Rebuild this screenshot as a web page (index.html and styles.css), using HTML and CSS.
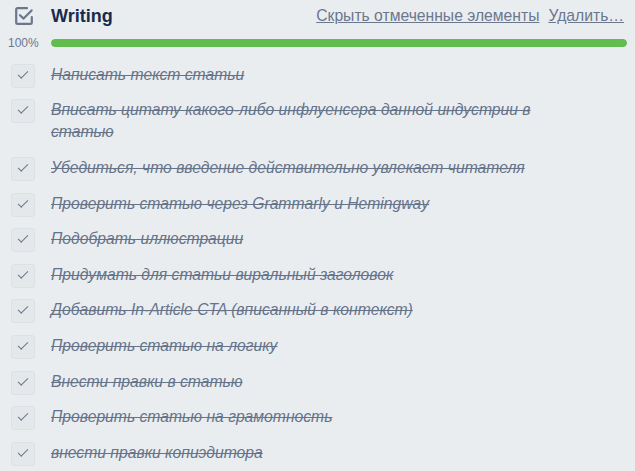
FILE: index.html
```html
<!DOCTYPE html>
<html lang="ru">
<head>
    <meta charset="UTF-8">
    <meta name="viewport" content="width=device-width, initial-scale=1.0">
    <title>Writing</title>
    <link rel="stylesheet" href="styles.css">
</head>
<body>
    <div class="checklist">
        <div class="checklist-header">
            <div class="header-icon">
                <svg width="20" height="20" viewBox="0 0 20 20">
                    <path d="M13 2.2H3.6Q2.2 2.2 2.2 3.6V16.4Q2.2 17.8 3.6 17.8H16.4Q17.8 17.8 17.8 16.4V11" fill="none" stroke="#6b778c" stroke-width="2.2" stroke-linecap="round"/>
                    <path d="M6 9.2L9.6 12.6L17.6 4.4" fill="none" stroke="#6b778c" stroke-width="2.2" stroke-linecap="round" stroke-linejoin="round"/>
                </svg>
            </div>
            <h3 class="checklist-title">Writing</h3>
            <div class="header-links">
                <a href="#">Скрыть отмеченные элементы</a>
                <a href="#">Удалить…</a>
            </div>
        </div>

        <div class="progress">
            <span class="progress-percent">100%</span>
            <div class="progress-track">
                <div class="progress-bar" style="width: 100%"></div>
            </div>
        </div>

        <ul class="items">
            <li class="item"><span class="checkbox"></span><span class="item-text">Написать текст статьи</span></li>
            <li class="item"><span class="checkbox"></span><span class="item-text">Вписать цитату какого-либо инфлуенсера данной индустрии в статью</span></li>
            <li class="item"><span class="checkbox"></span><span class="item-text">Убедиться, что введение действительно увлекает читателя</span></li>
            <li class="item"><span class="checkbox"></span><span class="item-text">Проверить статью через Grammarly и Hemingway</span></li>
            <li class="item"><span class="checkbox"></span><span class="item-text">Подобрать иллюстрации</span></li>
            <li class="item"><span class="checkbox"></span><span class="item-text">Придумать для статьи виральный заголовок</span></li>
            <li class="item"><span class="checkbox"></span><span class="item-text">Добавить In-Article CTA (вписанный в контекст)</span></li>
            <li class="item"><span class="checkbox"></span><span class="item-text">Проверить статью на логику</span></li>
            <li class="item"><span class="checkbox"></span><span class="item-text">Внести правки в статью</span></li>
            <li class="item"><span class="checkbox"></span><span class="item-text">Проверить статью на грамотность</span></li>
            <li class="item"><span class="checkbox"></span><span class="item-text">внести правки копиэдитора</span></li>
        </ul>
    </div>
</body>
</html>
```

FILE: styles.css
```css
body {
    margin: 0;
    background: #eaedf0;
    font-family: "Liberation Sans", Arial, sans-serif;
    color: #172b4d;
}

.checklist {
    padding: 4px 0 0 0;
}

.checklist-header {
    display: flex;
    align-items: center;
    height: 24px;
    padding-right: 11px;
}

.header-icon {
    width: 51px;
    padding-left: 14px;
    box-sizing: border-box;
    display: flex;
    align-items: center;
}

.checklist-title {
    margin: 0;
    font-size: 18px;
    font-weight: bold;
    color: #172b4d;
}

.header-links {
    margin-left: auto;
    display: flex;
    gap: 9px;
}

.header-links a {
    color: #6b778c;
    font-size: 15.7px;
    text-decoration: underline;
}

.progress {
    display: flex;
    align-items: center;
    margin-top: 8px;
    padding-right: 8px;
}

.progress-percent {
    width: 43px;
    padding-left: 8px;
    font-size: 12px;
    color: #6b778c;
}

.progress-track {
    flex: 1;
    height: 8px;
    border-radius: 4px;
    background: #dfe1e6;
    overflow: hidden;
}

.progress-bar {
    height: 100%;
    background: #61bd4f;
    border-radius: 4px;
}

.items {
    list-style: none;
    margin: 7px 0 0 0;
    padding: 0;
}

.item {
    display: flex;
    align-items: flex-start;
    padding: 6.8px 0;
}

.checkbox {
    flex: none;
    position: relative;
    width: 22px;
    height: 22px;
    margin: 0 16px -2px 11px;
    border: 1px solid #dde0e5;
    border-radius: 3px;
    background: #e5e8eb;
}

.checkbox::after {
    content: "";
    position: absolute;
    left: 6px;
    top: 6px;
    width: 9px;
    height: 4px;
    border-left: 1.6px solid #6b778c;
    border-bottom: 1.6px solid #6b778c;
    transform: rotate(-45deg);
}

.item-text {
    max-width: 510px;
    font-size: 15.7px;
    line-height: 22px;
    font-style: italic;
    color: #66748a;
    text-decoration: line-through;
}
```
